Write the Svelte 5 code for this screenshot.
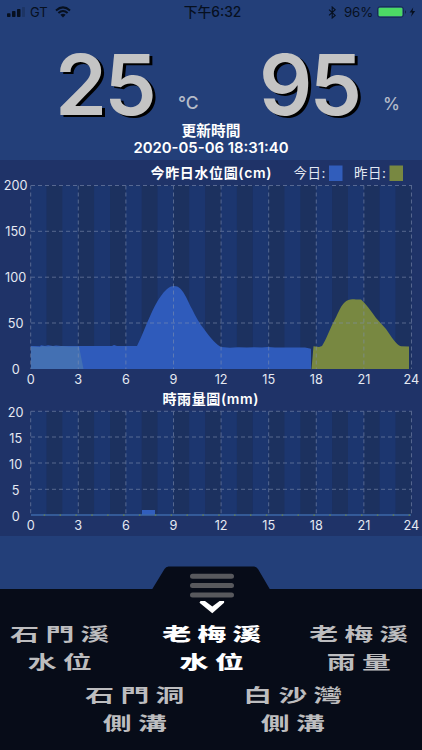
<script>
  const hours = [0, 3, 6, 9, 12, 15, 18, 21, 24];
  const left = 30.7;
  const step = 15.865;
  const x = (h) => left + h * step;
  const levels = [[200, 25.5], [150, 71.3], [100, 117.2], [50, 163], [0, 208.8]];
  const rain = [[20, 251.3], [15, 277], [10, 303], [5, 329.3], [0, 355]];
  const columns = Array.from({ length: 24 }, (_, i) => i);
  const stations = [
    [['石門溪', '水位', false], ['老梅溪', '水位', true], ['老梅溪', '雨量', false]],
    [['石門洞', '側溝', false], ['白沙灣', '側溝', false]]
  ];
</script>

<div class="screen">
  <header class="status">
    <div class="carrier">
      <svg width="18" height="10" viewBox="0 0 18 10"><rect y="6.2" width="3.5" height="3.8" rx=".8"/><rect x="5" y="4" width="3.5" height="6" rx=".8"/><rect x="10" y="2" width="3.5" height="8" rx=".8"/><rect x="15" width="3" height="10" rx=".8" opacity=".22"/></svg>
      <span>GT</span>
      <svg class="wifi" width="16" height="12" viewBox="0 0 16 12"><path d="M1 4.5Q8-1.7 15 4.5M3.4 7Q8 3 12.6 7" fill="none" stroke="#07101f" stroke-width="2"/><path d="M5.4 8.8Q8 6.7 10.6 8.8L8 11.5Z"/></svg>
    </div>
    <time>下午6:32</time>
    <div class="power">
      <svg width="9" height="13" viewBox="0 0 9 13"><path d="M1 3.7 7.2 9.4 4.2 12V1l3 2.7L1 9.4" fill="none" stroke="#07101f" stroke-width="1.1"/></svg>
      <span>96%</span>
      <svg width="39" height="12" viewBox="0 0 39 12"><rect x=".5" y=".7" width="26" height="10.6" rx="2.7" fill="none" stroke="#172b54"/><rect x="1.6" y="1.8" width="23.8" height="8.4" rx="1.2" fill="#4cda65"/><path d="M28 4v4q1.5-2 0-4"/><path d="M36.2 1.4 32.6 6.6h2.5L34 10.7l4.2-5.8h-2.6z"/></svg>
    </div>
  </header>

  <section class="readings">
    <div class="reading temperature"><strong>25</strong><span>°C</span></div>
    <div class="reading humidity"><strong>95</strong><span>%</span></div>
  </section>
  <section class="updated"><div>更新時間</div><div class="stamp">2020-05-06 18:31:40</div></section>

  <svg class="charts" width="422" height="376" viewBox="0 0 422 376">
    <rect width="422" height="376" fill="#1f3368"/>
    {#each columns as c}
      <rect x={x(c)} y="25.5" width={step} height="183.5" fill={c % 2 ? '#1c315f' : '#1c366f'}/>
      <rect x={x(c)} y="251.3" width={step} height="104" fill={c % 2 ? '#1c315f' : '#1c366f'}/>
    {/each}
    <path fill="#2f5bbb" d="M31 209V186l9 .2 1-1 4 .8 3-.7 5 .8 3-.7 5 .6h14l37 .1 2-1 3 1h20C142 176 145 167 151 154C158 139 166 126 174 126C183 126 187 140 192 149C196 157 199 163 204 169C211 179 217 185 221 187L230 187.7 238 187.3 247 187.6 254 187.2 262 187.6 268 187 275 187.6H305L311 188.7V209Z"/>
    <path fill="#4370b3" d="M31 209V186.5l9 .4 2-1 5 .5 5-.4 5 .5 5-.4 7 .5h10L83.5 209Z"/>
    <path fill="#788841" d="M311.5 209 313.5 186.2 319 187 322 186C326 180 329 171 333 163C338 154 340 147 344 143C349 138 353 139.5 356 139.5H361C366 144 371 151 376 158L386 169C391 176 396 185 401 186.2L409 186.5V209Z"/>
    <rect x="142" y="350" width="13" height="5" fill="#315ebd"/>
    <path d="M31 355H411" stroke="#3d68a8" stroke-width="1.3"/>
    {#each columns as c}<rect x={x(c) + 13} y="354.5" width="1.5" height="1.2" fill="#708540"/>{/each}
    <g class="grid">
      {#each levels.slice(0, 4) as row}<path d={`M31 ${row[1]}H412`}/>{/each}
      {#each rain.slice(0, 4) as row}<path d={`M31 ${row[1]}H412`}/>{/each}
      {#each hours as h}<path d={`M${x(h)} 25.5V209M${x(h)} 251.3V355.5`}/>{/each}
    </g>
    <g class="axis">
      {#each levels as row}<text x="15.7" y={row[1] + 4.8}>{row[0]}</text>{/each}
      {#each rain as row}<text x="15.7" y={row[1] + 6}>{row[0]}</text>{/each}
      {#each hours as h}<text x={x(h)} y="224.3">{h}</text><text x={x(h)} y="369.8">{h}</text>{/each}
    </g>
    <g class="title">
      <text x="150.5" y="18.2" textLength="121" lengthAdjust="spacing">今昨日水位圖(cm)</text>
      <text x="162.5" y="243.7" textLength="96" lengthAdjust="spacing">時雨量圖(mm)</text>
    </g>
    <g class="legend">
      <text x="293.5" y="18" textLength="32">今日:</text><rect x="329" y="5.5" width="13.5" height="15.5" fill="#315dbb"/>
      <text x="354" y="18" textLength="32">昨日:</text><rect x="389.5" y="5.5" width="13.5" height="15.5" fill="#788841"/>
    </g>
  </svg>

  <nav>
    <svg class="handle" width="120" height="49" viewBox="0 0 120 49">
      <path fill="#070c18" d="M1 23.5 13.5 3Q15 .5 17.5.5H103Q105.5.5 107 3L119 23.5V49H1Z"/>
      <path d="M41.5 10.2H80.5M41.5 19.5H80.5M41.5 29H80.5" stroke="#58595d" stroke-width="5" stroke-linecap="round"/>
      <path d="M49.5 34.9h4.5l7.3 5.7 7.3-5.7h4.5v1.8L61.3 47.2 48.5 36.7Z" fill="#fff"/>
    </svg>
    <div class="stations">
      {#each stations as row, i}
        <div class:second={i === 1} class="row">
          {#each row as station}
            <button class:active={station[2]}><span>{station[0]}</span><span>{station[1]}</span></button>
          {/each}
        </div>
      {/each}
    </div>
  </nav>
</div>

<style>
  :global(body) { margin: 0; background: #233f79; }
  .screen { width: 422px; height: 750px; overflow: hidden; display: flex; flex-direction: column; background: #233f79; color: #fff; font-family: Inter, "Noto Sans CJK TC", sans-serif; }
  .status { height: 24px; box-sizing: border-box; display: grid; grid-template-columns: 1fr auto 1fr; align-items: center; padding: 0 5px 0 7px; color: #07101f; font-size: 13px; line-height: 24px; }
  .status svg { fill: #07101f; }
  .carrier, .power { display: flex; align-items: center; }
  .carrier span { margin-left: 5px; }
  .wifi { margin-left: 7px; }
  .status time { font-weight: 500; font-size: 13.8px; margin-left: 1px; }
  .power { justify-content: flex-end; }
  .power span { margin: 0 4px 0 7px; font-size: 13.3px; letter-spacing: -.2px; }
  .power svg:last-child { margin-right: 1px; }
  .readings { height: 98px; display: flex; }
  .reading { display: flex; align-items: baseline; white-space: nowrap; line-height: 121px; }
  .temperature { padding-left: 55px; width: 203px; box-sizing: border-box; }
  .humidity { padding-left: 56px; }
  .reading strong { width: 99px; font-size: 83.5px; font-weight: 600; letter-spacing: -2.8px; color: #c4c4c4; text-shadow: 3px 2px #000; }
  .reading span { color: #b5bbc8; font-size: 17.5px; font-weight: 500; margin-left: 24px; transform: translateY(-6px); }
  .humidity span { margin-left: 25px; font-size: 17px; transform: translateY(-5px); }
  .updated { height: 38px; text-align: center; font-size: 14.7px; font-weight: 600; line-height: 18px; }
  .updated div { height: 17px; }
  .updated .stamp { font-size: 14.9px; }
  .charts { display: block; flex: none; }
  .grid { fill: none; stroke: #8190b1; stroke-width: 1; stroke-dasharray: 4 3; opacity: .58; }
  .axis { fill: #e5e9f2; font-size: 12.7px; text-anchor: middle; }
  .title { fill: #fff; font-size: 14px; font-weight: 600; }
  .legend { fill: #e3e8f3; font-size: 13.5px; }
  nav { width: 422px; height: 214px; display: flex; flex-direction: column; align-items: center; padding-top: 30px; box-sizing: border-box; background: linear-gradient(#233f79 0 53px, #070c18 53px); }
  .handle { display: block; flex: none; }
  .stations { width: 422px; }
  .row { display: flex; padding-top: 5px; height: 61px; box-sizing: border-box; }
  .second { padding-left: 57px; padding-right: 49px; }
  button { flex: 1; height: 54px; padding: 0; border: 0; background: none; display: flex; flex-direction: column; align-items: center; color: #bdbdbf; font: 700 18px/27.5px "Noto Sans CJK TC", sans-serif; }
  button span { display: block; white-space: nowrap; letter-spacing: 4px; margin-right: -4px; transform: scaleX(1.6); }
  button.active { color: #fff; font-weight: 900; }
  .row:first-child button:first-child { flex: 0 0 121px; }
  .row:first-child button:nth-child(2) { flex: 0 0 183px; }
  .row:first-child button:last-child { flex: 0 0 112px; }
</style>
